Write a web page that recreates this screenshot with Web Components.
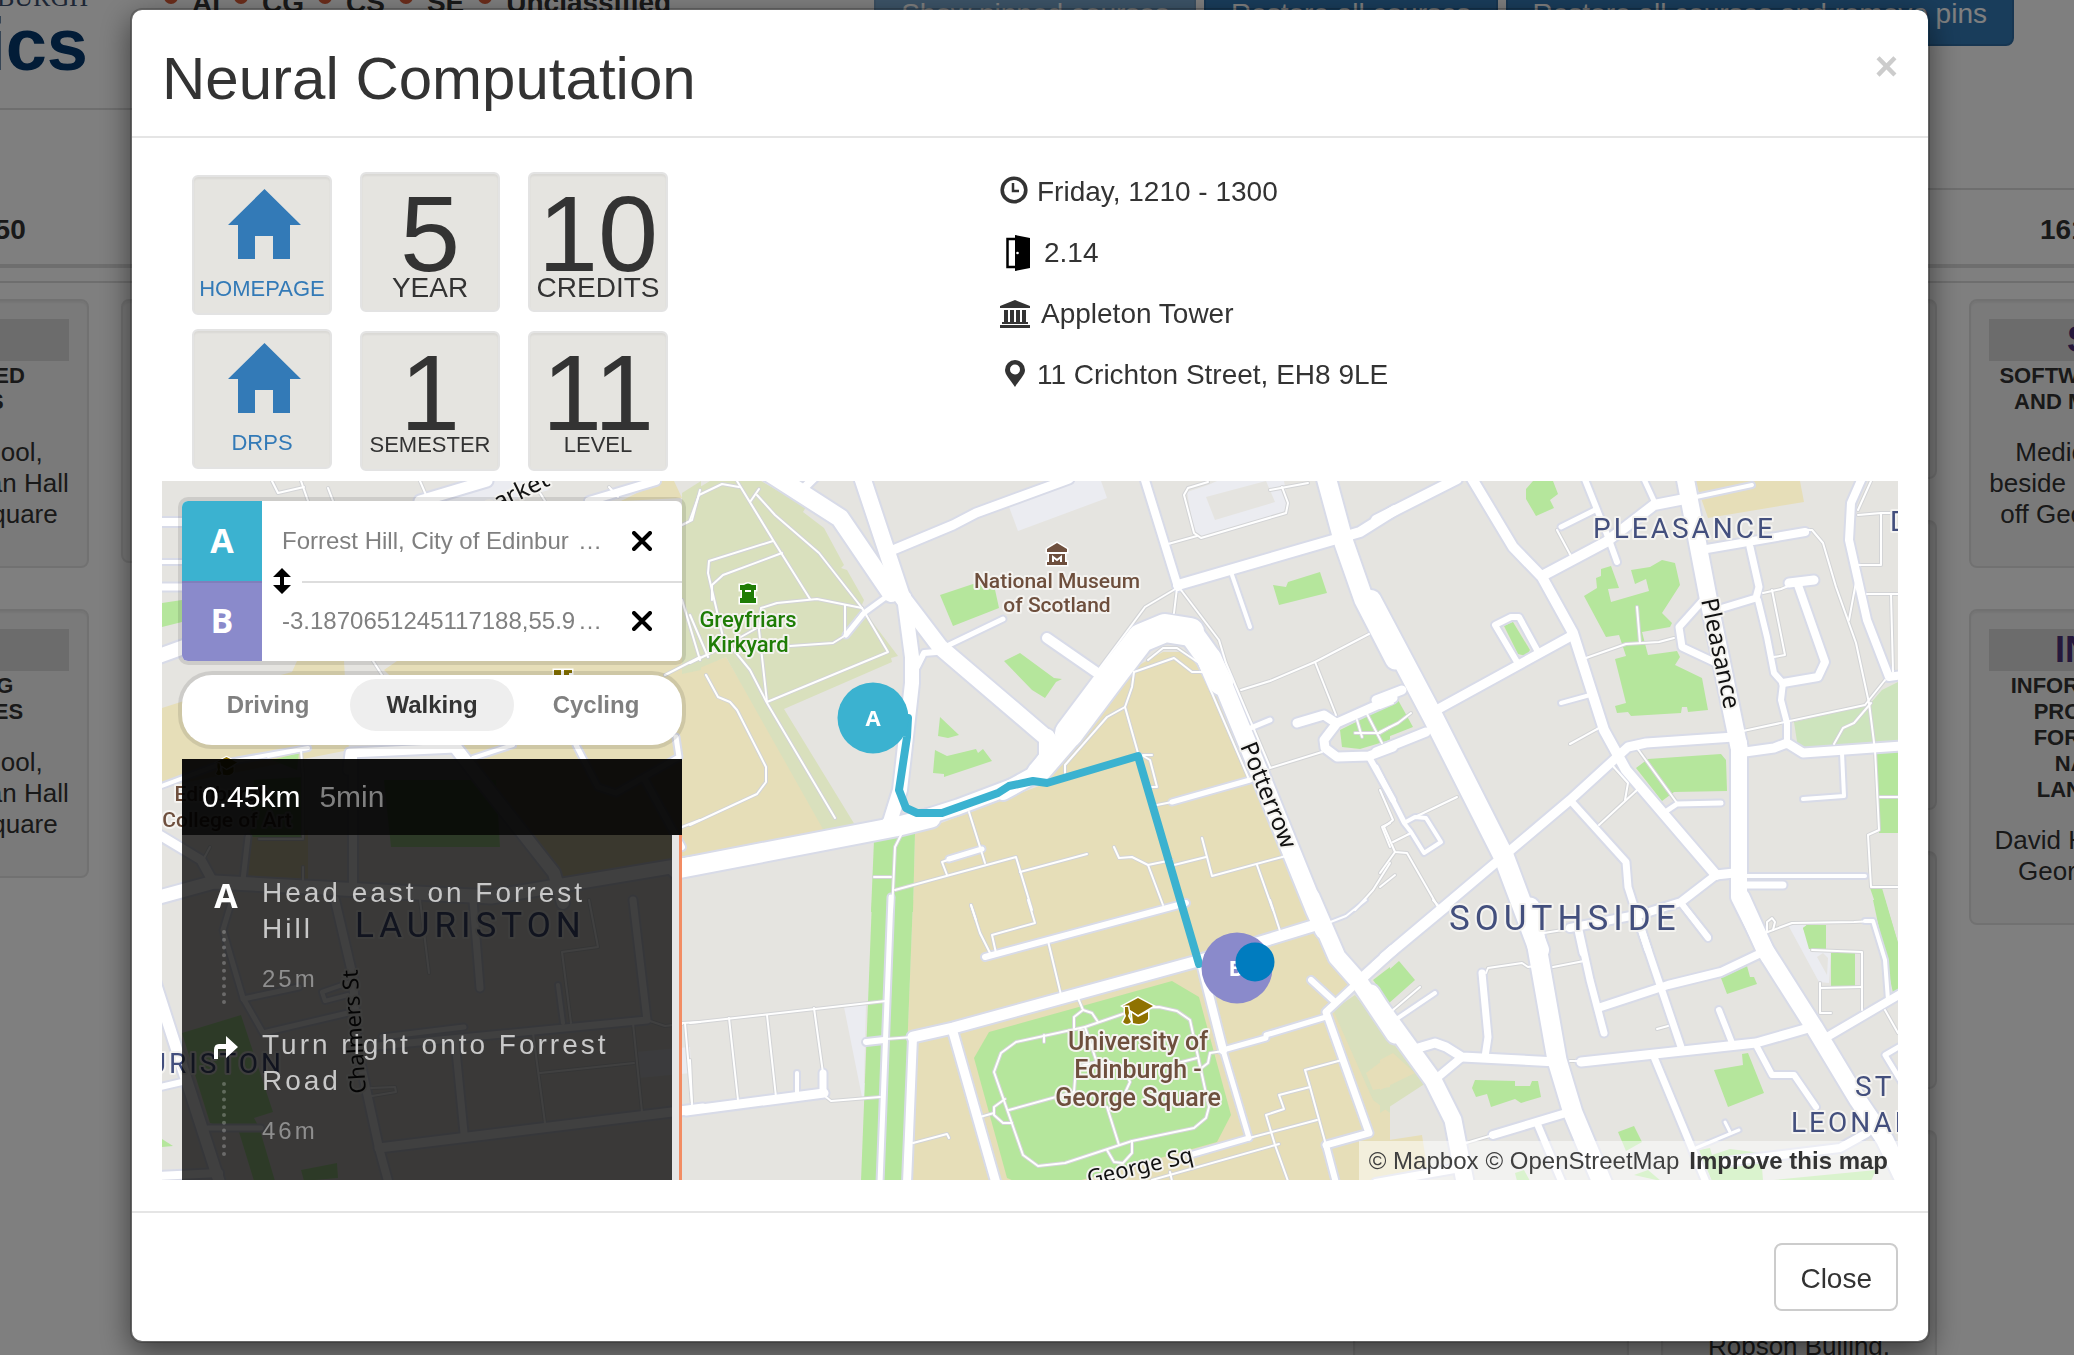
<!DOCTYPE html>
<html lang="en">
<head>
<meta charset="utf-8">
<title>Timetable</title>
<style>
html,body{margin:0;height:100%;overflow:hidden}
body{font-family:"Liberation Sans",Arial,sans-serif;font-size:28px;color:#333;background:#fff}
</style>
</head>
<body>
<timetable-page></timetable-page>
<course-dialog></course-dialog>
<script>
function define(name, html) {
  const t = document.createElement('template');
  t.innerHTML = html;
  customElements.define(name, class extends HTMLElement {
    constructor() {
      super();
      this.attachShadow({mode: 'open'}).append(t.content.cloneNode(true));
    }
  });
}

/* ---------- timetable behind the dialog ---------- */
define('course-card', `
<style>
:host{display:block;box-sizing:border-box;border:2px solid #e3e3e3;border-radius:8px;background:#f5f5f5;
 box-shadow:inset 0 2px 2px rgba(0,0,0,.05);padding:18px;text-align:center;font-size:26px;line-height:31px;white-space:nowrap}
.code{height:42px;line-height:42px;background:#d9d9d9;font-size:36px;font-weight:bold;color:#4b3078;overflow:hidden}
.title{font-size:22px;line-height:26px;font-weight:bold;color:#333;padding-top:2px;margin-bottom:22px}
.place{margin-bottom:18px}
:host([blank]) .code,:host([blank]) .title{display:none}
</style>
<div class="code"><slot name="code"></slot></div>
<div class="title"><slot name="title"></slot></div>
<div class="place"><slot></slot></div>`);

define('timetable-page', `
<style>
:host{display:block;height:100vh;overflow:hidden}
header{display:flex;justify-content:space-between;align-items:flex-start;height:110px;box-sizing:border-box}
.brand{width:132px;height:110px;box-sizing:border-box;border-bottom:2px solid #ddd;color:#04386e;display:flex;flex-direction:column;flex:none}
.uni,.inf{width:88px;display:flex;justify-content:flex-end}
.uni{font:26px/24px "Liberation Serif",serif;color:#3a4d6b;margin-top:-14px}
.inf{font-size:74px;line-height:70px;font-weight:bold}
.filters{display:flex;gap:14px;margin:-20px auto 0 32px;font-weight:bold;line-height:32px}
.filters label{display:flex;align-items:center;gap:14px}
.filters input{appearance:none;margin:0 0 22px;width:14px;height:24px;border-radius:8px;background:#d65a36}
.actions{display:flex;gap:8px;margin:-22px 60px 0 0}
button{font:28px/40px "Liberation Sans",sans-serif;color:#fff;background:#337ab7;border:2px solid #2e6da4;padding:14px 25px 10px;border-radius:8px;white-space:nowrap}
button:disabled{opacity:.65}
.band{height:80px;display:flex;justify-content:flex-end}
.band i{width:50%;border-bottom:2px solid #ddd}
.grid{display:grid;grid-template-columns:repeat(8,276px);gap:32px;margin-left:-187px}
.times{height:74px;align-items:center;border-bottom:4px solid #ddd;font-weight:bold;text-align:center;line-height:32px}
.times span{padding-top:6px}
.week{margin-top:13px;border-top:2px solid #ddd}
.week .grid{padding-top:16px}
.col{display:flex;flex-direction:column;gap:41px}
.a{height:264px}.b{height:180px}.c{height:290px}.d{height:238px}.e{height:400px;padding-top:199px}.f{height:1200px}
</style>
<header>
 <div class="brand"><div class="uni">BURGH</div><div class="inf">ics</div></div>
 <div class="filters">
  <label><input type="checkbox">AI</label><label><input type="checkbox">CG</label><label><input type="checkbox">CS</label><label><input type="checkbox">SE</label><label><input type="checkbox">Unclassified</label>
 </div>
 <div class="actions"><button disabled>Show pinned courses</button><button>Restore all courses</button><button>Restore all courses and remove pins</button></div>
</header>
<div class="band"><i></i></div>
<div class="grid times"><span>1000 - 1050</span><span></span><span></span><span></span><span></span><span></span><span></span><span>1610-1700</span></div>
<div class="week"><div class="grid">
 <div class="col">
  <course-card><span slot="code">DS</span><span slot="title">DISTRIBUTED<br>SYSTEMS</span>Medical School,<br>beside McEwan Hall<br>off George Square</course-card>
  <course-card><span slot="code">CT</span><span slot="title">COMPILING<br>TECHNIQUES</span>Medical School,<br>beside McEwan Hall<br>off George Square</course-card>
 </div>
 <div class="col"><course-card blank class="a"></course-card></div>
 <div class="col"></div><div class="col"></div><div class="col"></div>
 <div class="col"><course-card blank class="f"></course-card></div>
 <div class="col"><course-card blank class="b"></course-card><course-card blank class="c"></course-card><course-card blank class="d"></course-card><course-card blank class="e">Robson Builing,</course-card></div>
 <div class="col">
  <course-card><span slot="code">SDM</span><span slot="title">SOFTWARE DESIGN<br>AND MODELLING</span>Medical School,<br>beside McEwan Hall<br>off George Square</course-card>
  <course-card><span slot="code">INF2A</span><span slot="title">INFORMATICS 2A:<br>PROCESSING<br>FORMAL AND<br>NATURAL<br>LANGUAGES</span>David Hume Tower,<br>George Square</course-card>
 </div>
</div></div>`);

/* ---------- fact tiles ---------- */
define('fact-tile', `
<style>
:host{display:block;box-sizing:border-box;width:140px;height:140px;border:2px solid #e3e3e3;border-radius:6px;background:#e5e4e0;
 box-shadow:inset 0 2px 2px rgba(0,0,0,.05);text-align:center;color:#333}
.big{font-size:108px;line-height:120px;height:100px}
.label{font-size:28px;line-height:28px}
:host([small]) .label{font-size:22px}
:host([small]) .big{height:98px}
</style>
<div class="big"><slot></slot></div><div class="label"><slot name="label"></slot></div>`);

define('link-tile', `
<style>
:host{display:block;box-sizing:border-box;width:140px;height:140px;border:2px solid #e3e3e3;border-radius:6px;background:#e5e4e0;
 box-shadow:inset 0 2px 2px rgba(0,0,0,.05)}
a{display:flex;flex-direction:column;align-items:center;color:#337ab7;text-decoration:none;font-size:22px;line-height:28px;padding:12px 0 0 4px}
svg{display:block;margin-bottom:16px}
span{margin-left:-4px}
</style>
<a href="#"><svg width="73" height="70" viewBox="0 0 73 70" fill="currentColor"><path d="M36.5 0 73 36H62V70H45V47H27V70H10V36H0Z"/></svg><span><slot></slot></span></a>`);

define('info-row', `
<style>
:host{display:flex;align-items:center;height:61px;font-size:28px;line-height:32px;color:#333}
slot[name=icon]{display:block}
</style><slot name="icon"></slot><span><slot></slot></span>`);

/* ---------- map ---------- */
/* Each tile: origin, horizontal scale; vertical scale is 3 for all. */
const TILES = {
 L1:[0,470,2.24], L2:[0,900,2.24], M1:[690,470,2.24], M2:[690,900,2.24], R1:[1380,470,2.2594], R2:[1380,900,2.2594]
};
const AREAS = {
 tan:{
  L1:['363,715 420,690 655,605 665,573 770,573 782,840 363,950','860,600 890,573 1570,540 1570,1160 1250,1225 1040,835','1390,93 1480,33 1510,33 1528,85','560,1080 690,1080 690,1230 555,1230'],
  M1:['0,600 80,560 310,1083 0,1165','505,1090 800,940 985,600 1060,545 1100,545 1150,590 1170,640 1340,1160 1400,1325 500,1325'],
  M2:['500,0 1390,0 1410,80 1490,260 1440,330 1568,640 1568,843 475,843 490,300'],
  R1:['712,33 950,33 957,95 740,143'],
  R2:['0,640 20,720 95,705 110,843 0,843']},
 cem:{
  L1:['1528,70 1570,33 1570,600 1528,613'],
  M1:['0,70 45,33 160,33 260,110 252,125 300,175 345,285 338,295 352,300 390,390 382,410 465,558 450,565 452,577 210,718 370,1065 300,1083 80,560 0,605'],
  M2:['1440,330 1490,285 1568,420 1568,640 1530,600'],
  R2:['0,380 105,550 0,640']},
 tan2:{R2:['0,480 30,460 80,520 0,570'],M2:['1515,520 1568,465 1568,560 1530,570']},
 pale:{R1:['935,755 1105,705 1135,660 1170,635 1170,820 945,835']},
 lot:{
  L1:['930,93 1060,33 1200,33 1230,60 1140,93'],
  L2:['1425,455 1545,440 1548,520 1430,535'],
  M1:['713,103 850,33 920,33 933,83 735,183','1113,65 1160,45 1180,33 1330,33 1340,100 1330,130 1150,200 1130,190'],
  M2:['345,320 395,310 390,550 415,550 415,590 385,590'],
  R2:['920,70 960,65 975,148 1020,150 1015,250 993,245']},
 base:{M1:['1155,80 1290,33 1310,95 1175,150'],R2:['988,172 1000,160 1012,175 1010,225']},
 green:{
  L1:['363,400 408,390 408,455 363,470','610,870 670,850 665,900','860,930 1110,930 1120,1130 875,1130','570,930 680,920 680,1100 560,1100'],
  L2:['408,400 540,345 612,635 570,655 580,680 615,843 570,843 535,695 470,670','675,810 755,790 758,835 680,843','363,718 388,738 363,740'],
  M1:['560,375 640,338 680,345 692,415 588,468','703,573 740,548 815,625 833,627 820,635 795,685 765,660','560,740 603,795 578,805 556,798','548,840 575,858 640,838 645,850 657,838 677,873 570,920 568,913 545,908','412,1110 505,1090 500,1325 405,1325','1305,345 1335,350 1340,335 1412,305 1427,368 1320,406','1455,780 1568,705 1568,810 1500,838 1460,832'],
  M2:['407,0 500,0 475,843 382,843','670,395 1080,242 1140,290 1212,645 1180,725 870,843 725,843 710,835 637,475','1530,240 1568,200 1568,310'],
  R1:['330,58 345,33 390,33 403,73 385,90 393,113 353,138 330,88','460,378 490,355 487,325 500,318 500,298 523,288 540,355 515,358 523,395 607,362 600,328 577,342 567,300 610,290 637,270 667,280 678,345 638,430 660,458 655,470 593,487 605,555 670,543 677,560 667,585 728,625 742,720 695,727 693,712 683,712 680,730 568,738 560,725 535,730 530,708 555,698 530,568 555,558 540,495 510,502','280,468 300,455 338,540 330,557 312,553','0,715 40,690 75,770 0,810','605,868 770,852 782,870 783,962 665,966 638,993 578,895','1118,850 1170,845 1170,1090 1128,1090','1108,1255 1135,1255 1170,1420 1150,1420','955,1375 965,1365 1008,1365 1008,1437 975,1437'],
  R2:['0,235 42,182 80,240 18,312 0,285','955,85 965,75 1008,75 1008,147 970,147','1020,160 1074,160 1074,262 1020,262','770,235 830,198 835,230 845,232 852,253 785,282','215,540 305,543 305,557 340,557 343,543 358,543 364,590 318,610 305,597 250,620 242,583 218,590 208,565','755,510 820,495 818,462 832,460 867,580 787,620','538,697 573,677 592,725 555,752','720,750 745,745 750,765 790,748 860,760 865,843 750,843','305,820 325,810 340,843 310,843','575,825 605,810 635,843','890,840 1120,810 1110,843','1115,0 1140,0 1170,130 1170,280 1160,280']}
};
const ROADS = {
 L1:['8 350,155 415,155','4 350,275 415,275','7 350,352 415,352','14 350,560 430,522','4 350,955 500,880 690,835','9 780,900 785,850 1020,833','8 790,860 790,1250','12 1020,830 1240,1210 1260,1300','4 1060,865 1150,825','5 1290,825 1340,950 1380,970 1520,860 1515,800','6 1445,930 1528,1130','9 350,1090 450,1170 475,1230','13 350,1285 480,1235 1100,1280 1528,1185 1560,1178','5 555,1100 545,1230','11 940,93 1090,33','8 1320,93 1470,33'],
 L2:['11 340,220 490,843','6 350,563 408,545','8 350,828 490,820','5 520,0 500,90 545,295 590,400 780,340','5 545,298 670,260','8 750,0 790,230 800,440 850,745 870,843','9 850,745 1505,635 1575,625','7 1060,0 1075,265','7 1020,420 1040,700','7 800,445 1450,360 1418,0','4 780,250 722,275 728,302 780,285','5 465,685 585,685','4 1250,255 1262,370','5 855,410 1040,380'],
 M1:['18 180,10 335,145 450,370','16 385,20 475,380 560,530 805,810','14 480,380 497,560 497,640 470,960 448,1055','19 -30,1198 460,1070 540,1045','15 460,1070 600,1010 720,950','16 700,965 770,915 800,860 800,800','22 780,910 850,800 850,790 950,610','28 850,790 950,610 1010,505 1065,475 1120,485','24 1120,485 1160,560 1190,640','18 1170,560 1260,860 1400,1320 1420,1380','9 455,240 590,165 640,130 850,28','8 1018,20 1092,350','10 1092,345 1440,210 1500,185 1580,120','19 1425,20 1465,220 1510,390 1580,570','8 250,60 280,20','5 440,380 390,430 350,495','5 580,525 700,448','6 550,545 525,550 508,590','10 800,503 910,605','4 1215,315 1255,470','5 1235,785 1300,750','9 1360,758 1420,735 1448,760','9 1575,685 1450,760 1420,810 1422,835 1450,862 1520,858 1575,830','6 1520,860 1575,990','5 1080,995 1255,930','5 655,1138 580,1168'],
 M2:['11 500,412 590,385 1130,185 1270,130 1410,72','6 660,170 1110,10','8 500,412 485,850','9 590,395 685,850','9 -10,632 300,578','7 297,578 297,520','4 240,575 240,518','6 395,425 435,420','8 1145,190 1195,450','5 1195,450 1252,715','17 1390,-10 1450,170 1500,250 1580,405','10 1500,240 1575,150','7 1490,256 1425,335 1520,700 1425,735','6 1445,305 1392,240','5 1425,350 1290,405 1290,415 1195,450','6 1425,735 1447,850','5 1120,765 1252,715','5 450,-10 425,850','2 1430,70 1470,48 1515,0'],
 R1:['10 -10,150 175,28','10 205,20 300,230 365,320 435,490 505,780 555,900 760,1215','10 365,318 510,215 620,105 700,85','17 688,20 740,380 810,830','16 810,820 812,1280 880,1460','6 460,20 515,200 535,275','5 410,170 485,120','5 595,20 622,100','20 -20,390 120,740 280,1160 360,1440','9 115,730 435,495','6 310,575 260,465 295,440 315,440 355,540','9 -10,690 50,660','9 -10,845 105,785','9 10,1460 430,990 560,830 600,820 800,800','7 430,990 555,1175 560,1250 605,1440','4 410,700 475,675','8 725,240 960,187','7 835,230 857,350 850,385 775,415','7 735,385 675,470 683,530 755,575','4 715,80 840,45','8 945,345 1005,575 990,620 910,640','9 925,338 980,330','6 855,390 875,500 890,610 910,640 905,690 920,760 920,820','9 825,845 890,835 920,820 955,848 1180,828','8 1090,25 1065,100 1060,210 1100,450 1150,620 1180,616','4 1043,850 1048,978 955,988','5 645,1025 670,1003 770,998','9 760,1215 800,1208','8 760,1215 680,1295 600,1330 430,1375','6 680,1300 740,1405','4 830,1218 1095,1218','7 830,1245 910,1245','7 448,1380 458,1450','5 -10,890 55,1055','4 55,1058 80,1040 105,1045 138,1115 100,1148 70,1085 55,1058'],
 R2:['17 -20,280 0,320 120,540 165,660 195,860','19 340,20 400,480 435,640 505,860','9 -10,195 150,20','7 230,220 243,410 238,470','9 85,445 125,430 150,440 185,470 400,485','8 185,470 130,530','9 455,485 850,428 975,380','7 450,90 475,240 505,400','8 500,320 650,255 770,215 860,160','7 585,70 680,440','6 765,330 795,430','7 620,470 740,860','17 815,-10 870,150 980,380 1080,600 1140,720 1185,840','8 1010,410 1180,278','4 1095,62 1115,62 1140,180 1148,300','6 850,435 885,525 935,525 985,620','5 1180,435 1140,465 1180,550','8 255,705 420,640','7 355,670 415,860','3 715,745 810,690','3 780,665 790,695','8 780,785 1040,745 1100,700','8 -10,850 180,805','4 40,355 125,280','6 680,10 740,112']
};
const PATHS = {
 L1:['610,33 622,70 680,50','675,33 690,93','735,55 745,93','940,33 955,75','1210,70 1220,93','1365,50 1385,80','835,573 855,615','1528,390 1568,570','1490,615 1568,560','1528,165 1550,150 1568,60','1528,1070 1568,1050','600,860 690,838','675,840 678,920','580,1108 678,1108 678,920','678,1190 678,1230','455,1170 470,1130'],
 L2:['940,0 960,220','1320,0 1340,140 1258,155 1280,370','1195,400 1220,670','1418,370 1438,635','1210,520 1420,488','1528,370 1568,365','1535,370 1550,615','1450,360 1490,378 1528,372','830,565 885,562 888,575 820,590'],
 M1:['0,150 20,75 72,42 110,50','105,33 185,210 268,388','135,95 155,58','150,75 190,135 290,250 385,415 443,545 173,695','185,212 42,272 40,310 55,400 75,500 135,600 172,700 325,1045','205,248 75,315 50,345 50,390','0,435 40,560','385,415 285,387 195,400 160,415 155,480 172,695','385,430 350,495 320,520 225,527','348,405 348,490','0,578 75,530 150,475','35,615 62,680 90,695 105,720 170,890 170,935 150,972 0,1065','1090,355 1020,410 910,610','1090,355 1085,430','1100,360 1185,510 1200,580 1300,890','1070,222 1135,197','1160,35 1115,55 1107,75 1130,190 1145,205 1335,130 1340,100 1325,50','1300,60 1385,38','995,605 1085,565 1125,605 1150,605','1025,570 1060,535 1090,535 1140,580 1250,920','995,605 990,650 975,710 935,740 840,885 840,910','975,710 1003,850 1030,870 1045,950 1035,950','1045,1005 1080,995','1015,855 1035,855','625,1025 660,1180','655,1135 565,1175 575,1215','460,1260 730,1162 765,1320','740,1205 890,1152','950,1130 962,1165 990,1160 1025,1185 1080,1170','1025,1185 1060,1305','1085,1185 1155,1160','1147,1105 1170,1218 1335,1157','1270,1185 1305,1320','1235,660 1300,632 1400,575 1520,492','1400,575 1448,735','1300,895 1415,845','1490,790 1545,790 1568,770','1495,750 1505,800','1515,725 1550,820','452,1325 460,1130 475,1090','412,1220 450,1220','1568,1060 1550,1070 1568,1130','1568,1180 1530,1260 1490,1320','630,1305 640,1350','430,1055 445,1035'],
 M2:['0,368 440,303','88,355 107,600','173,345 193,590','278,325 297,520','0,480 5,610','305,590 315,602 425,590','440,418 500,412','802,122 832,285','630,15 650,100 672,160','757,0 772,70 677,105 685,160','870,295 880,330 900,340 915,365','860,385 860,350 880,330','970,342 885,380 730,425 697,460 682,515 745,765 780,798 840,790 990,723 1130,683 1155,655 1162,620 1120,360 1090,332 1050,320 1000,325','885,380 910,480','715,630 860,575 865,500 930,480 970,500 985,545 970,590','1075,495 1135,475','935,620 960,735','705,597 682,620 682,645 700,668 722,668','650,652 680,640','935,750 950,785 970,790 990,760 990,723','1195,452 1165,460 1160,490 1140,510','500,730 575,702 580,715','1252,715 1405,660','1460,480 1378,510 1388,560 1320,585 1330,628 1290,645 1310,735 1340,843','1388,560 1425,735','1035,840 1320,733','1075,815 1080,843','1300,0 1322,92','793,405 793,425'],
 R1:['400,180 432,258','960,180 975,180 1000,220 1030,350 1075,520 1105,700 1118,840 1128,1080 1103,1095 1110,1250 1170,1250','1080,135 1132,130 1132,285 1080,285','1132,130 1170,130','1100,372 1170,372','1155,372 1158,605','1075,335 1060,450','865,370 905,358 945,335','885,360 915,555 890,560','465,565 555,522 630,517 665,505','580,410 588,520','820,782 1095,705 1140,630','1110,700 1070,760 1045,775 1025,822','430,822 495,775','580,835 670,1000','525,885 560,940 553,990','495,1065 580,960','0,960 30,1050 10,1070 35,1145 60,1150 130,1310','80,1040 175,980','30,1115 70,1088','0,1210 35,1145','0,1250 35,1215','0,715 30,698','0,785 40,760 70,730','1130,982 1170,982','1110,33 1080,120'],
 R2:['240,220 245,205 320,188 335,200 350,198','370,100 440,85','390,200 460,182','30,330 90,262','195,730 255,705','625,388 650,378','870,100 930,68 1070,65 1115,62','875,95 875,65 885,55 893,65 888,90','975,150 1088,155 1090,330','995,265 1088,262','995,250 995,338 1020,338','1140,330 1170,400','430,484 460,484','120,0 140,30']
};
const place = (tile, pts) => pts.split(' ').map(p => {
  const [ox, oy, sx] = TILES[tile], [x, y] = p.split(',').map(Number);
  return Math.round(ox + x / sx) + ',' + Math.round(oy + y / 3);
}).join(' ');
const each = (set, fn) => Object.entries(set).flatMap(([tile, list]) => list.map(item => fn(tile, item))).join('');
const fills = {tan:'#e6deb8', cem:'#d9e0bd', tan2:'#e6deb8', pale:'#cde4bd', lot:'#ebecf1', base:'#e5e4e0', green:'#b5e69c'};
const areas = Object.entries(AREAS).map(([k, set]) => each(set, (t, p) => `<polygon fill="${fills[k]}" points="${place(t, p)}"/>`)).join('');
const roads = (extra, colour) => `<g stroke="${colour}">` + each(ROADS, (t, r) => {
  const i = r.indexOf(' ');
  return `<polyline stroke-width="${+r.slice(0, i) + extra}" points="${place(t, r.slice(i + 1))}"/>`;
}) + '</g>';
const trails = (w, colour) => `<g stroke="${colour}" stroke-width="${w}">` + each(PATHS, (t, p) => `<polyline points="${place(t, p)}"/>`) + '</g>';
const CAP = '<path d="M15 0 30 8 15 17 0 8Z"/><path d="M9 15 15 19 25 14V21Q21 28 10 25Z"/><path d="M2 9H5L6 15 5 18 8 24Q4 28 0 24L3 18 2 15Z"/>';

define('route-map', `
<style>
:host{display:block;position:relative;height:699px;overflow:hidden;background:#e5e4e0}
svg{display:block;width:100%;height:100%}
.lines{fill:none;stroke-linecap:round;stroke-linejoin:round}
text{paint-order:stroke;stroke:#f4f3f0;stroke-width:4px;stroke-linejoin:round}
.poi{font:500 21px Roboto,sans-serif;text-anchor:middle;fill:#6e4f3d}
.yard{font-size:22px;fill:#1f7d05}
.uni{font-size:25px}
.area{font:28px Roboto,sans-serif;letter-spacing:3px;fill:#434f7d}
.big{font-size:35px;letter-spacing:5px}
.street{font:24px "Noto Sans",sans-serif;fill:#111}
.lane{font-size:22px}
.pin{font:bold 22px "Open Sans",sans-serif;text-anchor:middle;fill:#fff;stroke:none}
.halo{stroke:#fff;stroke-width:3px;paint-order:stroke}
.credit{position:absolute;right:0;bottom:0;display:flex;gap:10px;padding:0 10px 0 10px;height:39px;line-height:40px;font-size:24px;background:rgba(255,255,255,.5);white-space:nowrap}
.credit span{display:flex;gap:7px}
.credit a{color:#404040;text-decoration:none}
.credit b a{color:#333}
</style>
<svg viewBox="162 481 1736 699" preserveAspectRatio="xMinYMin slice" role="img" aria-label="Walking route map">
${areas}
<g class="lines">${trails(4, '#d3d4d6')}${roads(4, '#d8dbe8')}${trails(2, '#fff')}${roads(0, '#fff')}
<polyline stroke="#3bb2d0" stroke-width="8" points="${place('M1', '488,745 485,800 468,960 483,1015 508,1030 565,1028 690,970 715,948 768,933 800,938 1003,857 1140,1482')}"/></g>
<g class="halo" fill="#6e4f3d"><path d="M1057 543 1067 549V552H1047V549ZM1049 554H1065V562H1067V565H1047V562H1049Z"/></g>
<path d="M1053 562V557L1057 560 1061 557V562" fill="none" stroke="#fff" stroke-width="2"/>
<g class="halo" fill="#1f7d05"><path d="M740 585H744Q748 582 752 585H756V590H754V598H756V603H740V598H742V590H740Z"/></g><path d="M745 591H751" stroke="#fff" stroke-width="2"/>
<g class="halo" fill="#8f7200" transform="translate(1123 998)">${CAP}</g>
<g class="halo" fill="#8f7200" transform="translate(216 757) scale(.7)">${CAP}</g>
<g class="halo" fill="#857100"><path d="M554 670H561V682H554ZM564 670H572V673H569V675H572V682H564Z"/></g>
<text class="poi" x="1057" y="588">National Museum</text><text class="poi" x="1057" y="612">of Scotland</text>
<text class="poi yard" x="748" y="627">Greyfriars</text><text class="poi yard" x="748" y="652">Kirkyard</text>
<text class="poi uni" x="1138" y="1050">University of</text><text class="poi uni" x="1138" y="1078">Edinburgh -</text><text class="poi uni" x="1138" y="1106">George Square</text>
<text class="poi" x="222" y="801">Edinburgh</text><text class="poi" x="227" y="827">College of Art</text>
<text class="area" x="1593" y="538">PLEASANCE</text><text class="area big" x="1449" y="930">SOUTHSIDE</text>
<text class="area big" x="355" y="937">LAURISTON</text><text class="area" x="284" y="1073" text-anchor="end">LAURISTON</text>
<text class="area" x="1855" y="1096">ST</text><text class="area" x="1791" y="1132">LEONARDS</text><text class="area" x="1890" y="531">D</text>
<text class="street" transform="translate(1240 746) rotate(68)">Potterrow</text>
<text class="street" transform="translate(1701 600) rotate(78)">Pleasance</text>
<text class="street lane" transform="translate(366 1093) rotate(-94)">Chalmers St</text>
<text class="street lane" transform="translate(1089 1186) rotate(-13)">George Sq</text>
<text class="street" text-anchor="end" transform="translate(551 485) rotate(-26)">Grassmarket</text>
<circle cx="873" cy="718" r="35.5" fill="#3bb2d0"/><text class="pin" x="873" y="726">A</text>
<circle cx="1237" cy="968" r="35.5" fill="#8a8acb"/><text class="pin" x="1236" y="976">B</text>
<circle cx="1255" cy="962" r="19.5" fill="#007cbf"/>
</svg>
<slot></slot>
<div class="credit"><span><a href="#">© Mapbox</a><a href="#">© OpenStreetMap</a></span><b><a href="#">Improve this map</a></b></div>`);

/* ---------- directions panel ---------- */
define('route-step', `
<style>
:host{display:grid;grid-template-columns:80px 1fr;height:152px;letter-spacing:3px}
.mark{display:flex;flex-direction:column;align-items:center;padding-left:4px}
.icon{height:55px;font:bold 34px/40px "Open Sans",sans-serif;letter-spacing:0;color:#fff;padding-left:4px}
.dots{height:74px;border-left:4px dotted rgba(255,255,255,.25)}
.text{font-size:28px;line-height:36px;color:#c8c8c8;margin-bottom:17px;padding-right:60px}
.dist{font-size:24px;line-height:30px;color:#8e8e8e}
</style>
<div class="mark"><div class="icon"><slot name="icon"></slot></div><div class="dots"></div></div>
<div><div class="text"><slot></slot></div><div class="dist"><slot name="dist"></slot></div></div>`);

define('directions-panel', `
<style>
:host{position:absolute;top:20px;left:20px;bottom:0;width:500px;display:flex;flex-direction:column;gap:14px}
.inputs{position:relative;display:grid;grid-template-columns:minmax(0,1fr);grid-template-rows:80px 80px;background:#fff;border-radius:6px;box-shadow:0 0 0 4px rgba(0,0,0,.1)}
.row{display:flex;align-items:center}
.row label{flex:none;width:80px;height:80px;font:bold 34px/78px "Open Sans",sans-serif;color:#fff;text-align:center;background:#3bb2d0;border-radius:6px 0 0 0}
.row+.row label{background:#8a8acb;border-radius:0 0 0 6px;box-shadow:inset 0 2px rgba(0,0,0,.08)}
.row input{flex:1;min-width:0;margin:0 0 0 20px;padding:0;border:0;outline:0;background:none;font:24px/30px "Liberation Sans",sans-serif;color:#808080}
.row span{flex:none;width:24px;font-size:24px;color:#808080}
.row button{flex:none;width:80px;height:80px;margin:0;padding:0;border:0;background:none;display:grid;place-items:center}
hr{position:absolute;left:120px;right:0;top:80px;margin:0;border:0;border-top:2px solid #ddd}
.swap{position:absolute;left:90px;top:66px;padding:0;border:0;background:none;line-height:0}
.modes{display:flex;height:70px;box-sizing:border-box;padding:4px;background:#fff;border-radius:30px;box-shadow:0 0 0 4px rgba(0,0,0,.1)}
.modes input{position:absolute;opacity:0;width:1px;height:1px;margin:0}
.modes label{flex:1;height:52px;line-height:52px;border-radius:26px;text-align:center;font-size:24px;font-weight:bold;color:#808080}
.modes input:checked+label{background:#eee;color:#333}
.out{flex:1;min-height:0;display:flex;flex-direction:column}
.sum{height:76px;box-sizing:border-box;background:rgba(0,0,0,.94);padding:0 20px;font-size:30px;line-height:76px;color:#fff;display:flex;gap:19px}
.sum span{color:#808080}
.scroll{flex:1;min-height:0;display:flex}
.steps{flex:1;background:rgba(0,0,0,.75);padding-top:40px;overflow:hidden}
.track{width:7px;background:#e6e6e6;border-right:3px solid #f28c63}
</style>
<div class="inputs">
 <div class="row"><label for="from">A</label><input id="from" value="Forrest Hill, City of Edinbur"><span>…</span><button aria-label="Clear start"><svg width="20" height="20" viewBox="0 0 20 20"><path d="M2 2 18 18M18 2 2 18" stroke="#000" stroke-width="4" stroke-linecap="round"/></svg></button></div>
 <div class="row"><label for="to">B</label><input id="to" value="-3.1870651245117188,55.9"><span>…</span><button aria-label="Clear end"><svg width="20" height="20" viewBox="0 0 20 20"><path d="M2 2 18 18M18 2 2 18" stroke="#000" stroke-width="4" stroke-linecap="round"/></svg></button></div>
 <hr><button class="swap" aria-label="Swap"><svg width="20" height="28" viewBox="0 0 20 28"><path d="M10 1 19 10H12V18H19L10 27 1 18H8V10H1Z"/></svg></button>
</div>
<div class="modes">
 <input type="radio" name="mode" id="driving"><label for="driving">Driving</label>
 <input type="radio" name="mode" id="walking" checked><label for="walking">Walking</label>
 <input type="radio" name="mode" id="cycling"><label for="cycling">Cycling</label>
</div>
<div class="out">
 <div class="sum">0.45km<span>5min</span></div>
 <div class="scroll"><div class="steps">
  <route-step><span slot="icon">A</span>Head east on Forrest Hill<span slot="dist">25m</span></route-step>
  <route-step><svg slot="icon" width="24" height="32" viewBox="0 0 24 32" fill="#fff"><path d="M0 31V22Q0 16 5 16H12V8L24 19 12 30V21H4V31Z"/></svg>Turn right onto Forrest Road<span slot="dist">46m</span></route-step>
 </div><div class="track"></div></div>
</div>`);

/* ---------- dialog ---------- */
define('course-dialog', `
<style>
:host{position:fixed;inset:0;background:rgba(0,0,0,.5);display:block;padding:8px 14px 0 0}
.dialog{width:min(1800px,100% - 40px);box-sizing:border-box;margin:0 auto;background:#fff;background-clip:padding-box;border:2px solid rgba(0,0,0,.2);border-radius:12px;box-shadow:0 10px 30px rgba(0,0,0,.5)}
header{display:flex;justify-content:space-between;align-items:flex-start;padding:36px 30px 24px;border-bottom:2px solid #e5e5e5}
h1{margin:0;font-size:60px;line-height:66px;font-weight:normal}
.x{border:0;background:none;padding:0;margin:0;font:bold 40px/40px "Liberation Sans",sans-serif;color:#ccc}
main{padding:34px 30px 31px}
.facts{display:grid;grid-template-columns:838fr 898fr;margin-bottom:10px}
.tiles{display:flex;gap:28px;padding-left:30px}
.tiles div{display:flex;flex-direction:column;gap:19px}
.tiles .links{gap:14px;padding-top:3px}
.info{display:flex;flex-direction:column;margin-top:-11px}
svg{display:block}
footer{display:flex;justify-content:flex-end;padding:30px;border-top:2px solid #e5e5e5}
.close{font:28px/40px "Liberation Sans",sans-serif;color:#333;background:#fff;border:2px solid #ccc;padding:14px 24px 10px;border-radius:8px}
</style>
<div class="dialog" role="dialog" aria-modal="true" aria-labelledby="t">
<header><h1 id="t">Neural Computation</h1><button class="x" aria-label="Close dialog">×</button></header>
<main>
 <div class="facts">
  <div class="tiles">
   <div class="links"><link-tile>HOMEPAGE</link-tile><link-tile>DRPS</link-tile></div>
   <div><fact-tile>5<span slot="label">YEAR</span></fact-tile><fact-tile small>1<span slot="label">SEMESTER</span></fact-tile></div>
   <div><fact-tile>10<span slot="label">CREDITS</span></fact-tile><fact-tile small>11<span slot="label">LEVEL</span></fact-tile></div>
  </div>
  <div class="info">
   <info-row><svg slot="icon" width="37" height="32" viewBox="0 0 37 32"><g fill="none" stroke="#333"><circle cx="14" cy="14" r="11.8" stroke-width="3.600"/><path d="M13 7V15H19" stroke-width="2.500"/></g></svg>Friday, 1210 - 1300</info-row>
   <info-row><svg slot="icon" width="44" height="36" viewBox="0 0 44 36"><path d="M16 4H7.500V32H16" stroke="#000" stroke-width="2.500" fill="none"/><path d="M15 0 30 3V33L15 36Z"/><circle cx="17.500" cy="18" r="1.300" fill="#fff"/></svg>2.14</info-row>
   <info-row><svg slot="icon" width="41" height="28" viewBox="0 0 41 28" fill="#333"><path d="M15 0 30 6V8H0V6ZM4 10H8V22H10V10H14V22H16V10H20V22H22V10H26V22H28V24H2V22H4ZM0 25H30V28H0Z"/></svg>Appleton Tower</info-row>
   <info-row><svg slot="icon" width="37" height="32" viewBox="0 0 37 32" fill="#333"><path fill-rule="evenodd" d="M15 1A10 10 0 0 1 25 11C25 16 20 20 15 28 10 20 5 16 5 11A10 10 0 0 1 15 1ZM15 5.500A5 5 0 1 0 15 15.500 5 5 0 1 0 15 5.500Z"/></svg>11 Crichton Street, EH8 9LE</info-row>
  </div>
 </div>
 <route-map><directions-panel></directions-panel></route-map>
</main>
<footer><button class="close">Close</button></footer>
</div>`);
</script>
</body>
</html>
